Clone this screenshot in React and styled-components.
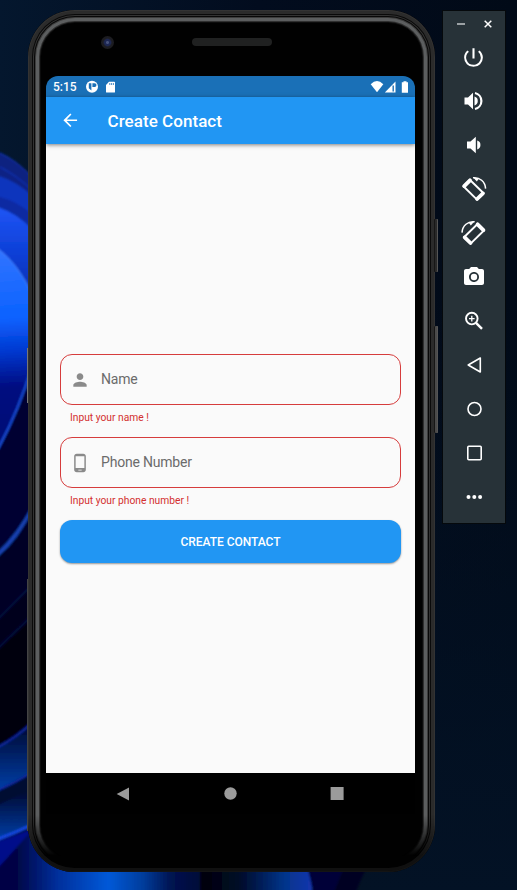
import React from "react";
import styled, { createGlobalStyle } from "styled-components";
import {
  MdPerson, MdPhoneAndroid, MdPowerSettingsNew, MdCameraAlt, MdArrowBack,
} from "react-icons/md";

const GlobalStyle = createGlobalStyle`
  * { box-sizing: border-box; }
  body { margin: 0; background: #020b1b; font-family: Roboto, "Liberation Sans", sans-serif; overflow: hidden; }
  svg { display: block; flex: none; }
`;

const Desktop = styled.main`
  position: relative;
  isolation: isolate;
  width: 517px;
  height: 890px;
  padding: 10px 0 0 28px;
  display: flex;
  align-items: flex-start;
  gap: 8px;
  overflow: hidden;
`;

const WallpaperArt = styled.svg`
  position: absolute;
  inset: 0;
  z-index: -1;
`;

const Phone = styled.div`
  position: relative;
  width: 407px;
  height: 862px;
  flex: none;
  border-radius: 47px;
  background: #010101;
  padding: 0 20px 0 18px;
  display: flex;
  flex-direction: column;
  box-shadow: inset 0 0 0 1px #141414, inset 0 0 0 4px #101010;

  &::before {
    content: "";
    position: absolute;
    inset: 0;
    border-radius: inherit;
    pointer-events: none;
    box-shadow:
      inset 0 0 0 1px #333,
      inset 0 0 0 4px #2b2b2b,
      inset 0 0 0 5px #0a0a0a,
      inset 0 0 0 6px #333,
      inset 0 0 0 7px #080808,
      inset 0 0 0 8px #3c3c3c,
      inset 0 0 0 11px #5c5e5f,
      inset 0 0 0 12px #303030,
      inset 0 0 0 13px #0c0c0c;
    mask-image: linear-gradient(#000 0 805px, transparent 846px);
  }
`;

const SideKey = styled.i`
  position: absolute;
  ${(p) => (p.$left ? "left: -1px" : "right: -3px")};
  top: ${(p) => p.$top}px;
  width: ${(p) => (p.$left ? 1 : 4)}px;
  height: ${(p) => p.$length}px;
  border-radius: ${(p) => (p.$left ? 0 : 1)}px;
  background: ${(p) => p.$tone};
  box-shadow: ${(p) => (p.$left ? "none" : "inset -1px 0 #555, inset 1px 0 #161616")};
`;

const TopBezel = styled.div`
  height: 66px;
  display: flex;
  padding: 26px 0 0 55px;
`;

const Camera = styled.div`
  width: 13px;
  height: 13px;
  border-radius: 50%;
  background: radial-gradient(circle, #46527c 0 1px, #1d2753 2px 3px, #1c1c20 4.5px 100%);
`;

const Speaker = styled.div`
  margin: 2px 0 0 78px;
  width: 80px;
  height: 8px;
  border-radius: 4px;
  background: #202121;
`;

const Screen = styled.section`
  height: 738px;
  display: flex;
  flex-direction: column;
  border-radius: 12px 12px 0 0;
  overflow: hidden;
  background: #000;
`;

const StatusBar = styled.div`
  height: 21px;
  flex: none;
  display: flex;
  align-items: center;
  padding: 0 6px 0 7px;
  background: #1a70b7;
  color: #fff;
`;

const Clock = styled.time`
  width: 33px;
  font-size: 12px;
  font-weight: 500;
  line-height: 20px;
`;

const StatusIcons = styled.div`
  display: flex;
  align-items: center;
  margin-left: ${(p) => (p.$end ? "auto" : 0)};
`;

const AppBar = styled.header`
  height: 47px;
  flex: none;
  display: flex;
  align-items: center;
  padding: 0 14px;
  background: #2196f3;
  color: #fff;
  z-index: 1;
  box-shadow: 0 1px 4px rgba(0, 0, 0, 0.5);
`;

const Title = styled.h1`
  margin: 0 0 0 27px;
  font-size: 17px;
  font-weight: 500;
  line-height: 22px;
  letter-spacing: 0.05px;
`;

const Form = styled.form`
  flex: 1;
  display: flex;
  flex-direction: column;
  padding: 210px 14px 0;
  background: #fafafa;
`;

const Field = styled.div`
  height: 83px;
`;

const FieldBox = styled.label`
  height: 51px;
  display: flex;
  align-items: center;
  gap: 11px;
  padding: 0 9px;
  border: 1px solid #d63c3c;
  border-radius: 12px;
  color: #8a8a8a;
`;

const FieldLabel = styled.span`
  margin-top: -2px;
  color: #6b6b6b;
  font-size: 14px;
  line-height: 18px;
  letter-spacing: -0.2px;
`;

const ErrorText = styled.p`
  margin: 7px 0 0 10px;
  font-size: 10.25px;
  line-height: 12px;
  color: #d32f2f;
`;

const SubmitButton = styled.button`
  height: 43px;
  border: 0;
  padding: 0;
  border-radius: 12px;
  background: #2196f3;
  color: #fff;
  font: 500 12px/44px Roboto, sans-serif;
  letter-spacing: -0.05px;
  box-shadow: 0 1px 2px rgba(0, 0, 0, 0.4);
`;

const NavBar = styled.nav`
  height: 41px;
  flex: none;
  display: flex;
  justify-content: space-between;
  align-items: center;
  padding: 0 71px 0 70px;
  background: #000;
`;

const Toolbar = styled.aside`
  width: 64px;
  height: 514px;
  flex: none;
  margin-left: -1px;
  border: 1px solid #05090c;
  background: #273238;
  color: #fff;
`;

const WindowControls = styled.div`
  height: 24px;
  display: flex;
  align-items: center;
  justify-content: space-between;
  padding: 2px 12px 0 13px;
`;

const ToolItem = styled.div`
  height: 44px;
  display: flex;
  align-items: center;
  justify-content: center;
  padding-right: 1px;
`;

function Wallpaper() {
  return (
    <WallpaperArt width="517" height="890" viewBox="0 0 517 890" aria-hidden="true">
      <defs>
        <linearGradient id="sky" x2="1" y2="0">
          <stop stopColor="#04172e" /><stop offset=".5" stopColor="#020c1e" /><stop offset="1" stopColor="#010a17" />
        </linearGradient>
        <linearGradient id="fall" x2="0" y2="1">
          <stop stopColor="#031225" stopOpacity="0" /><stop offset="1" stopColor="#031225" />
        </linearGradient>
        <linearGradient id="petal" gradientUnits="userSpaceOnUse" x1="0" y1="208" x2="0" y2="300">
          <stop stopColor="#1f55f5" /><stop offset=".5" stopColor="#0d3fd6" /><stop offset="1" stopColor="#032dae" />
        </linearGradient>
        <linearGradient id="bright" gradientUnits="userSpaceOnUse" x1="0" y1="250" x2="10" y2="446">
          <stop stopColor="#3274ff" /><stop offset=".35" stopColor="#0a62ff" />
          <stop offset=".52" stopColor="#0438cf" /><stop offset=".7" stopColor="#020c80" /><stop offset="1" stopColor="#020a74" />
        </linearGradient>
        <linearGradient id="low" x2="0" y2="1">
          <stop stopColor="#01062a" /><stop offset="1" stopColor="#063fa8" />
        </linearGradient>
        <linearGradient id="lowPetal" x2="1" y2="0">
          <stop stopColor="#000208" /><stop offset=".35" stopColor="#010a28" /><stop offset=".75" stopColor="#03348a" /><stop offset="1" stopColor="#1436ae" />
        </linearGradient>
        <linearGradient id="glow" x2="1" y2="0">
          <stop stopColor="#010545" /><stop offset=".1" stopColor="#010545" /><stop offset=".3" stopColor="#022f9b" />
          <stop offset=".55" stopColor="#0459d8" /><stop offset=".72" stopColor="#033d9c" /><stop offset=".86" stopColor="#021350" /><stop offset="1" stopColor="#010738" />
        </linearGradient>
        <filter id="soft" x="-20%" y="-5%" width="140%" height="110%"><feGaussianBlur stdDeviation=".8" /></filter>
      </defs>
      <rect width="517" height="890" fill="url(#sky)" />
      <rect y="300" width="517" height="590" fill="url(#fall)" />
      <g filter="url(#soft)">
        <path d="M-5 150L0 153Q16 160 32 177V890H-5Z" fill="#020330" />
        <path d="M-5 150L0 153Q16 160 32 177V190L-5 165Z" fill="#0a2180" />
        <path d="M-5 164L0 167Q16 175 32 190V198L-5 176Z" fill="#0b2384" />
        <path d="M-5 174L0 177Q16 182 32 196V214L-5 196Z" fill="#0d34bd" />
        <path d="M-5 195L0 197Q16 201 32 214V230L-5 206Z" fill="#0a2aa2" />
        <path d="M-5 206L0 208Q16 213 32 229V300H-5Z" fill="url(#petal)" />
        <path d="M-5 246L0 250Q18 264 32 294V366Q20 408 0 446L-5 454Z" fill="url(#bright)" />
        <path d="M0 153Q16 160 32 177M0 167Q16 175 32 190M0 177Q16 182 32 196" fill="none" stroke="#143bc4" />
        <path d="M-2 249Q18 264 32 294" fill="none" stroke="#4583ff" />
        <path d="M32 366Q20 408 -2 449" fill="none" stroke="#1a4fe0" strokeWidth="2" />
        <path d="M34 506Q18 537 -4 556V900H34Z" fill="#01020f" />
        <path d="M34 506Q18 537 -4 556" fill="none" stroke="#1643b4" strokeWidth="4" />
        <path d="M34 508Q18 540 -4 561V619L34 583Z" fill="#010528" />
        <path d="M34 583L-4 621V650L34 614Z" fill="#01031d" />
        <path d="M34 583L-4 621M34 614L-4 650" fill="none" stroke="#020a40" strokeWidth="2" />
        <path d="M34 721Q15 739 -4 748V791L34 771Z" fill="url(#low)" />
        <path d="M34 771Q15 783 -4 791V810L34 790Z" fill="#010732" />
        <path d="M34 721Q15 739 -4 748M34 771Q15 783 -4 791" fill="none" stroke="#0b29a1" strokeWidth="2" />
        <path d="M34 788L-4 806V840L34 824Z" fill="url(#low)" />
        <path d="M34 824Q15 833 -4 840" fill="none" stroke="#164ae6" strokeWidth="3" />
        <path d="M-4 842L32 830L84 868H200V895H-4Z" fill="url(#glow)" />
        <path d="M-4 842L34 828L-4 870Z" fill="#04108a" />
        <path d="M200 865H305Q313 876 312 895H200Z" fill="url(#lowPetal)" />
        <path d="M307 865H345L333 895H314Z" fill="#010438" />
        <path d="M345 865H368Q358 885 355 895H333Z" fill="#010222" />
      </g>
    </WallpaperArt>
  );
}

function VolumeIcon({ loud }) {
  return (
    <svg width="22" height="22" viewBox="0 0 22 22" fill="currentColor">
      <path d={loud ? "M1.5 7.5H5L10 2.8V19.2L5 14.5H1.5Z" : "M4 7.5H7.5L12.8 2.8V19.2L7.5 14.5H4Z"} />
      {loud ? (
        <>
          <path d="M11.5 6.6A4.6 4.6 0 0 1 11.5 15.4Z" />
          <path d="M12 3A8.2 8.2 0 0 1 12 19" fill="none" stroke="currentColor" strokeWidth="2.2" />
        </>
      ) : <path d="M14.2 6.6A4.6 4.6 0 0 1 14.2 15.4Z" />}
    </svg>
  );
}

function RotateIcon({ mirrored }) {
  return (
    <svg width="26" height="26" viewBox="0 0 26 26" fill="none">
      <g transform={mirrored ? "matrix(-1 0 0 1 25.6 0)" : undefined}>
        <path d="M8.8 3.8L22.6 17.2L16 23.6L2.4 10.3Z" stroke="currentColor" strokeWidth="1.9" strokeLinejoin="round" />
        <path d="M9 4.3L3.2 10.1M21.9 17.4L16.1 23" stroke="currentColor" strokeWidth="3.8" strokeLinecap="round" />
        <path d="M12 1.8C18.6 1 24.2 5.6 24.6 12.6" stroke="currentColor" strokeWidth="1.5" />
        <path d="M12 1.3L18 2.5L15.8 5.6Z" fill="currentColor" />
      </g>
    </svg>
  );
}

function MagnifierIcon() {
  return (
    <svg width="24" height="24" viewBox="0 0 24 24" fill="none" stroke="currentColor">
      <circle cx="9.8" cy="9.6" r="5.8" strokeWidth="1.9" />
      <path d="M14 13.8L20 19.8" strokeWidth="2.5" />
      <path d="M9.8 6.8V12.4M7 9.6H12.6" strokeWidth="1.3" />
    </svg>
  );
}

function OutlineIcon({ shape }) {
  return (
    <svg width="18" height="18" viewBox="0 0 18 18" fill="none" stroke="currentColor" strokeWidth="1.6" strokeLinejoin="round">
      {shape === "back" && <path d="M15.3 2V16L3.2 9Z" />}
      {shape === "home" && <circle cx="9.5" cy="9" r="6.5" />}
      {shape === "recent" && <rect x="2.8" y="2.3" width="13.4" height="13.4" rx="1" />}
      {shape === "more" && <g fill="currentColor" stroke="none"><circle cx="3.5" cy="9" r="2" /><circle cx="9.3" cy="9" r="2" /><circle cx="15.1" cy="9" r="2" /></g>}
    </svg>
  );
}

const tools = [
  <MdPowerSettingsNew size={25} />,
  <VolumeIcon loud />,
  <VolumeIcon />,
  <RotateIcon />,
  <RotateIcon mirrored />,
  <MdCameraAlt size={24} />,
  <MagnifierIcon />,
  <OutlineIcon shape="back" />,
  <OutlineIcon shape="home" />,
  <OutlineIcon shape="recent" />,
  <OutlineIcon shape="more" />,
];

const fields = [
  { label: "Name", error: "Input your name !", Icon: MdPerson },
  { label: "Phone Number", error: "Input your phone number !", Icon: MdPhoneAndroid },
];

export default function App() {
  return (
    <>
      <GlobalStyle />
      <Desktop>
        <Wallpaper />
        <Phone>
          <SideKey $left $top={338} $length={55} $tone="#777" />
          <SideKey $left $top={569} $length={252} $tone="#444" />
          <SideKey $top={209} $length={53} $tone="#292929" />
          <SideKey $top={316} $length={107} $tone="#4a4a4a" />
          <TopBezel><Camera /><Speaker /></TopBezel>
          <Screen>
            <StatusBar>
              <Clock>5:15</Clock>
              <StatusIcons>
                <svg width="33" height="14" viewBox="0 0 33 14">
                  <circle cx="6" cy="6.8" r="6" fill="#fff" />
                  <path d="M2.8 3.2H5.4V10.6L2.8 8.2ZM6.4 3.2H8.6A1.9 1.9 0 0 1 8.6 7H6.4Z" fill="#1a70b7" />
                  <path d="M23 1.8H28.2Q29 1.8 29 2.6V11.9Q29 12.5 28.2 12.5H20.8Q20 12.5 20 11.9V5Z" fill="#fff" />
                  <path d="M23.8 3V5M25.6 3V5M27.4 3V5" stroke="#1a70b7" strokeWidth=".8" />
                </svg>
              </StatusIcons>
              <StatusIcons $end>
                <svg width="39" height="14" viewBox="0 0 39 14">
                  <path d="M.7 4.2Q7-2.2 13.3 4.2L7 12.2Z" fill="#fff" />
                  <path d="M14.8 12.4L25.5 1.6V12.4Z" fill="#fff" />
                  <path d="M23.2 5.5V11.5" stroke="#1a70b7" strokeWidth="1.4" />
                  <path d="M33.5 1.2H36.5V2.2H38V12.7H31.8V2.2H33.5Z" fill="#fff" />
                </svg>
              </StatusIcons>
            </StatusBar>
            <AppBar><MdArrowBack size={20.5} /><Title>Create Contact</Title></AppBar>
            <Form>
              {fields.map(({ label, error, Icon }) => (
                <Field key={label}>
                  <FieldBox><Icon size={20} /><FieldLabel>{label}</FieldLabel></FieldBox>
                  <ErrorText>{error}</ErrorText>
                </Field>
              ))}
              <SubmitButton type="button">CREATE CONTACT</SubmitButton>
            </Form>
            <NavBar>
              <svg width="14" height="14" viewBox="0 0 14 14"><path d="M.7 7L13 .5V13.5Z" fill="#9b9b9b" /></svg>
              <svg width="14" height="14" viewBox="0 0 14 14"><circle cx="7.5" cy="6.5" r="6.2" fill="#9b9b9b" /></svg>
              <svg width="14" height="14" viewBox="0 0 14 14"><rect x=".6" y="0" width="13" height="13" fill="#9b9b9b" /></svg>
            </NavBar>
          </Screen>
        </Phone>
        <Toolbar>
          <WindowControls>
            <svg width="10" height="10" viewBox="0 0 10 10"><path d="M1 5H9" stroke="#9ba1a4" strokeWidth="2" /></svg>
            <svg width="10" height="10" viewBox="0 0 10 10"><path d="M1.7 1.7L8.3 8.3M8.3 1.7L1.7 8.3" stroke="#fff" strokeWidth="1.5" /></svg>
          </WindowControls>
          {tools.map((tool, i) => <ToolItem key={i}>{tool}</ToolItem>)}
        </Toolbar>
      </Desktop>
    </>
  );
}
